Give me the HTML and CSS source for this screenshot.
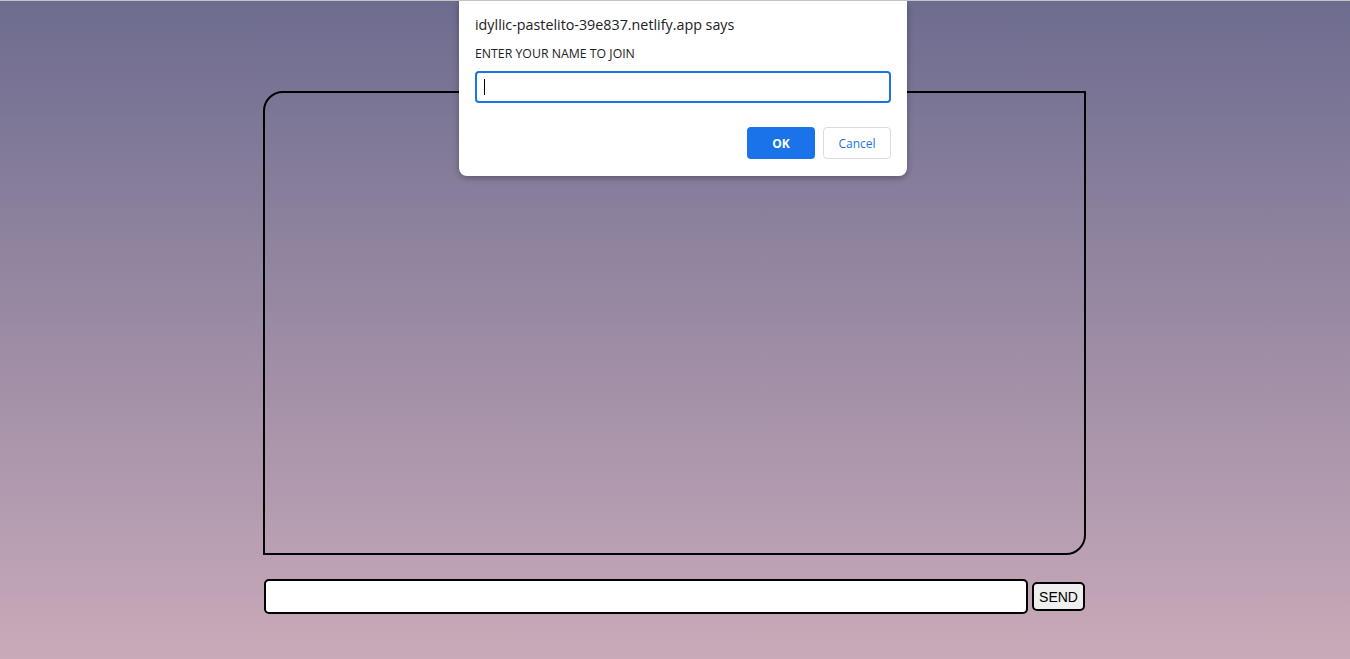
FILE: index.html
```html
<!DOCTYPE html>
<html>
<head>
<meta charset="utf-8">
<link rel="stylesheet" href="styles.css">
</head>
<body>
<main class="page">
  <section class="chat"></section>
  <form class="composer">
    <input class="msg" type="text">
    <button class="send" type="button">SEND</button>
  </form>
</main>
<div class="dialog">
  <div class="dlg-title">idyllic-pastelito-39e837.netlify.app says</div>
  <div class="dlg-label">ENTER YOUR NAME TO JOIN</div>
  <div class="dlg-input"><span class="caret"></span></div>
  <div class="dlg-actions">
    <button class="btn-ok" type="button">OK</button>
    <button class="btn-cancel" type="button">Cancel</button>
  </div>
</div>
</body>
</html>
```
FILE: styles.css
```css
html, body {
  margin: 0;
  height: 100%;
}
body {
  background: linear-gradient(to bottom, #6d6c8f 0%, #c9aab9 100%);
  border-top: 1px solid #c4c4c4;
  box-sizing: border-box;
  font-family: "Liberation Sans", Arial, sans-serif;
  overflow: hidden;
  position: relative;
}
.page {
  display: flex;
  flex-direction: column;
  align-items: center;
  padding-top: 90px;
  padding-right: 2px;
}
.chat {
  width: 819px;
  height: 460px;
  border: 2px solid #000;
  border-radius: 20px 0 20px 0;
}
.composer {
  display: flex;
  align-items: center;
  gap: 4px;
  margin-top: 24px;
  width: 822px;
  padding-left: 1px;
  box-sizing: border-box;
}
.msg {
  width: 764px;
  height: 35px;
  box-sizing: border-box;
  border: 2px solid #000;
  border-radius: 5px;
  background: #fff;
  margin: 0;
}
.send {
  width: 53px;
  height: 29px;
  box-sizing: border-box;
  border: 2px solid #000;
  border-radius: 5px;
  background: #efefef;
  font-family: "Liberation Sans", Arial, sans-serif;
  font-size: 14px;
  color: #000;
  padding: 0;
  margin: 0;
}
.dialog {
  position: absolute;
  top: 0;
  left: 459px;
  width: 448px;
  height: 175px;
  box-sizing: border-box;
  background: #fff;
  border-radius: 0 0 8px 8px;
  box-shadow: 0 2px 6px rgba(0,0,0,0.3);
  padding: 14px 16px 0 16px;
  font-family: "Open Sans", "Noto Sans", sans-serif;
  color: #202124;
}
.dlg-title {
  font-size: 14.3px;
  line-height: 20px;
}
.dlg-label {
  font-size: 12.3px;
  line-height: 16px;
  margin-top: 11px;
  color: #202124;
}
.dlg-input {
  margin-top: 9px;
  height: 32px;
  box-sizing: border-box;
  border: 2px solid #1a73e8;
  border-radius: 4px;
  display: flex;
  align-items: center;
  padding-left: 7px;
}
.caret {
  width: 1px;
  height: 16px;
  background: #000;
}
.dlg-actions {
  display: flex;
  justify-content: flex-end;
  gap: 8px;
  margin-top: 24px;
}
.btn-ok, .btn-cancel {
  height: 32px;
  width: 68px;
  box-sizing: border-box;
  border-radius: 4px;
  font-family: "Open Sans", "Noto Sans", sans-serif;
  font-size: 12px;
  padding: 0;
}
.btn-ok {
  background: #1a73e8;
  color: #fff;
  border: none;
  font-weight: 700;
}
.btn-cancel {
  background: #fff;
  color: #1a73e8;
  border: 1px solid #dadce0;
}
```
